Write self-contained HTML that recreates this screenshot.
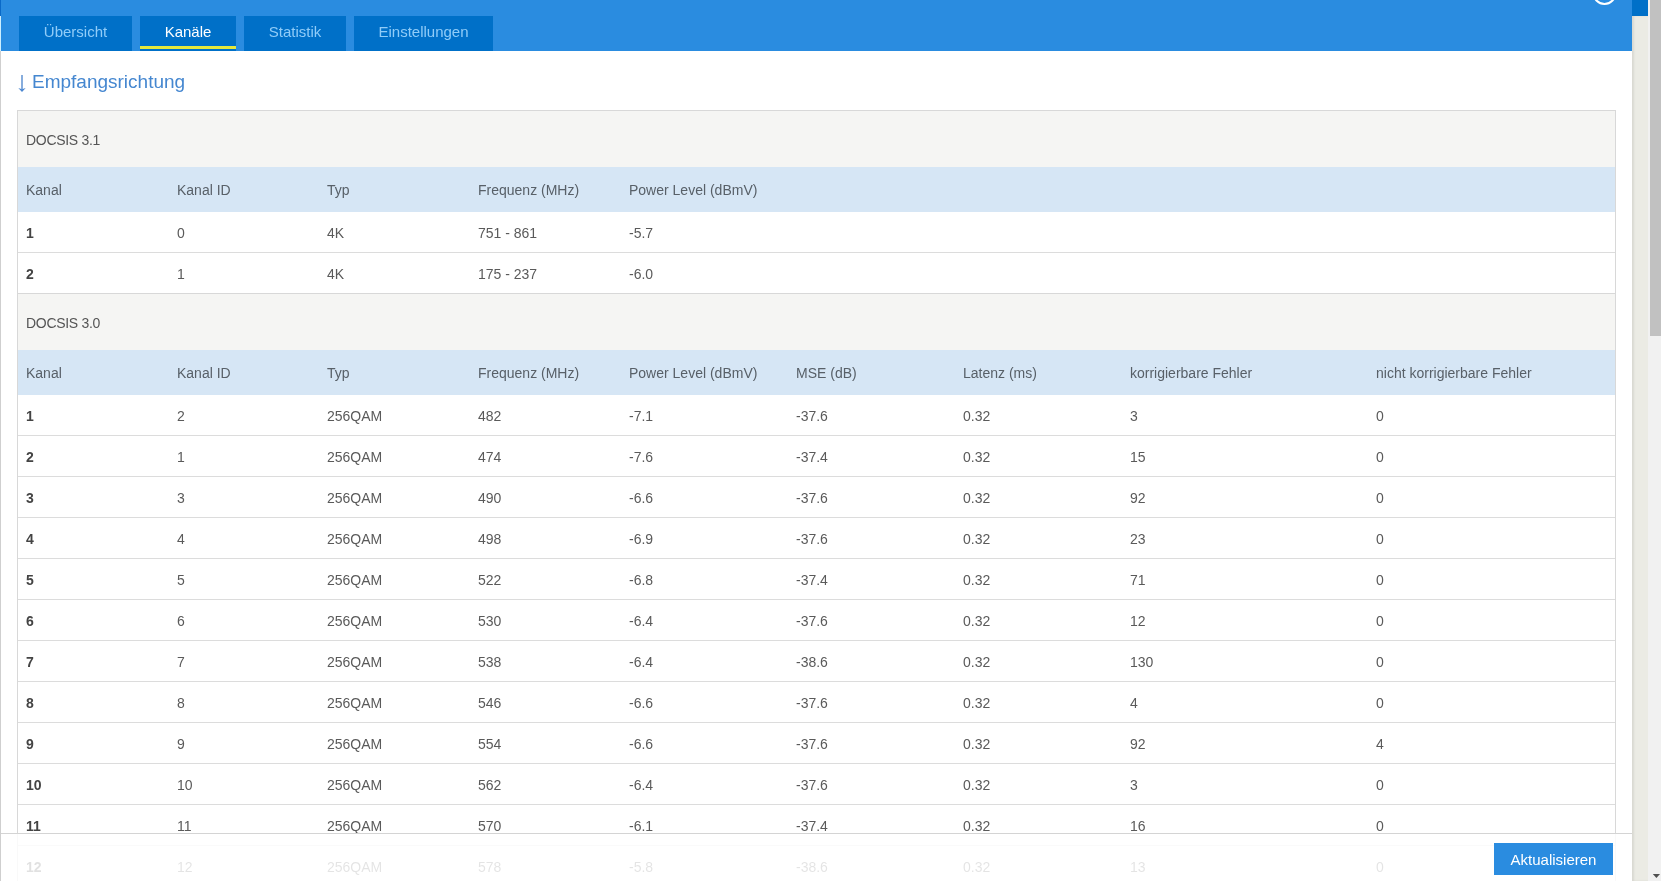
<!DOCTYPE html>
<html><head><meta charset="utf-8"><style>
*{margin:0;padding:0;box-sizing:border-box}
html,body{width:1661px;height:881px;overflow:hidden;background:#fff;font-family:"Liberation Sans",sans-serif;position:relative}
div{position:absolute}
.th,.td,.tab,.h2,.st,.btn{will-change:transform}
.lstrip{left:0;top:0;width:1px;height:881px;background:#cfcfcf}
.hdr{left:1px;top:0;width:1631px;height:51px;background:#2a8ce0}
.tab{top:16px;height:35px;background:#0070c8;color:#90ccf8;font-size:15px;text-align:center;line-height:31px}
.tab.on{color:#fff}
.uline{left:0;bottom:2px;width:100%;height:3px;background:#e4e83c}
.h2{left:32px;top:70px;font-size:19px;line-height:24px;color:#4587d0;white-space:nowrap}
.box{left:17px;width:1599px;border:1px solid #d8d8d8;background:#fff}
.sec{left:18px;width:1597px;background:#f5f5f3}
.st{left:26px;font-size:14px;letter-spacing:-0.3px;color:#555;white-space:nowrap}
.hd{left:18px;width:1597px;background:#d6e6f5}
.th{font-size:14px;color:#586068;white-space:nowrap;letter-spacing:0px}
.td{font-size:14px;color:#5a5a5a;white-space:nowrap;letter-spacing:0px}
.td.b{font-weight:bold;color:#444}
.rl{left:18px;width:1597px;height:1px;background:#dcdcdc}
.foot{left:1px;top:833px;width:1631px;height:48px;background:rgba(255,255,255,0.84);border-top:1px solid #d4d4d4}
.btn{left:1494px;top:843px;width:119px;height:32px;padding-top:1px;background:#2a8ce0;color:#fff;font-size:15px;text-align:center;line-height:32px;white-space:nowrap}
.rstrip{left:1632px;top:16px;width:16px;height:865px;background:#ebebe4;box-shadow:inset 2px 0 2px rgba(0,0,0,0.08)}
.rblk{left:1632px;top:0;width:16px;height:16px;background:#0070c8}
.track{left:1648px;top:0;width:13px;height:881px;background:#f1f1f1}
.thumb{left:1650px;top:0;width:11px;height:336px;background:#c1c1c1}
</style></head><body>
<div class="hdr"></div>
<div class="lstrip"></div>
<div style="left:0;top:0;width:1px;height:16px;background:#0a6ac8"></div>
<div style="left:0;top:16px;width:1px;height:35px;background:#cdefff"></div>
<div class="tab" style="left:19px;width:113px">Übersicht</div><div class="tab on" style="left:140px;width:96px">Kanäle<div class="uline"></div></div><div class="tab" style="left:244px;width:102px">Statistik</div><div class="tab" style="left:354px;width:139px">Einstellungen</div>
<svg style="position:absolute;left:1590px;top:0" width="30" height="10" viewBox="0 0 30 10"><circle cx="14.5" cy="-7" r="11" fill="none" stroke="#fff" stroke-width="2"/></svg>
<svg style="position:absolute;left:14px;top:70px" width="16" height="25" viewBox="0 0 16 25"><rect x="7.1" y="5" width="1.8" height="14" fill="#7aa5da"/><path d="M4.3 18.1 L8 21.9 L11.7 18.1 L8 19.3 Z" fill="#4a86d0"/></svg><div class="h2">Empfangsrichtung</div>
<div class="box" style="top:110px;height:184px"></div><div class="sec" style="top:111px;height:56px"></div><div class="st" style="top:112px;height:56px;line-height:56px">DOCSIS 3.1</div><div class="hd" style="top:167px;height:45px"></div><div class="th" style="left:26px;top:168px;height:45px;line-height:45px">Kanal</div><div class="th" style="left:177px;top:168px;height:45px;line-height:45px">Kanal ID</div><div class="th" style="left:327px;top:168px;height:45px;line-height:45px">Typ</div><div class="th" style="left:478px;top:168px;height:45px;line-height:45px">Frequenz (MHz)</div><div class="th" style="left:629px;top:168px;height:45px;line-height:45px">Power Level (dBmV)</div><div class="rl" style="top:252px"></div><div class="td b" style="left:26px;top:213px;height:40px;line-height:40px">1</div><div class="td" style="left:177px;top:213px;height:40px;line-height:40px">0</div><div class="td" style="left:327px;top:213px;height:40px;line-height:40px">4K</div><div class="td" style="left:478px;top:213px;height:40px;line-height:40px">751 - 861</div><div class="td" style="left:629px;top:213px;height:40px;line-height:40px">-5.7</div><div class="rl" style="top:293px"></div><div class="td b" style="left:26px;top:254px;height:40px;line-height:40px">2</div><div class="td" style="left:177px;top:254px;height:40px;line-height:40px">1</div><div class="td" style="left:327px;top:254px;height:40px;line-height:40px">4K</div><div class="td" style="left:478px;top:254px;height:40px;line-height:40px">175 - 237</div><div class="td" style="left:629px;top:254px;height:40px;line-height:40px">-6.0</div><div class="box" style="top:293px;height:628px"></div><div class="sec" style="top:294px;height:56px"></div><div class="st" style="top:295px;height:56px;line-height:56px">DOCSIS 3.0</div><div class="hd" style="top:350px;height:45px"></div><div class="th" style="left:26px;top:351px;height:45px;line-height:45px">Kanal</div><div class="th" style="left:177px;top:351px;height:45px;line-height:45px">Kanal ID</div><div class="th" style="left:327px;top:351px;height:45px;line-height:45px">Typ</div><div class="th" style="left:478px;top:351px;height:45px;line-height:45px">Frequenz (MHz)</div><div class="th" style="left:629px;top:351px;height:45px;line-height:45px">Power Level (dBmV)</div><div class="th" style="left:796px;top:351px;height:45px;line-height:45px">MSE (dB)</div><div class="th" style="left:963px;top:351px;height:45px;line-height:45px">Latenz (ms)</div><div class="th" style="left:1130px;top:351px;height:45px;line-height:45px">korrigierbare Fehler</div><div class="th" style="left:1376px;top:351px;height:45px;line-height:45px">nicht korrigierbare Fehler</div><div class="rl" style="top:435px"></div><div class="td b" style="left:26px;top:396px;height:40px;line-height:40px">1</div><div class="td" style="left:177px;top:396px;height:40px;line-height:40px">2</div><div class="td" style="left:327px;top:396px;height:40px;line-height:40px">256QAM</div><div class="td" style="left:478px;top:396px;height:40px;line-height:40px">482</div><div class="td" style="left:629px;top:396px;height:40px;line-height:40px">-7.1</div><div class="td" style="left:796px;top:396px;height:40px;line-height:40px">-37.6</div><div class="td" style="left:963px;top:396px;height:40px;line-height:40px">0.32</div><div class="td" style="left:1130px;top:396px;height:40px;line-height:40px">3</div><div class="td" style="left:1376px;top:396px;height:40px;line-height:40px">0</div><div class="rl" style="top:476px"></div><div class="td b" style="left:26px;top:437px;height:40px;line-height:40px">2</div><div class="td" style="left:177px;top:437px;height:40px;line-height:40px">1</div><div class="td" style="left:327px;top:437px;height:40px;line-height:40px">256QAM</div><div class="td" style="left:478px;top:437px;height:40px;line-height:40px">474</div><div class="td" style="left:629px;top:437px;height:40px;line-height:40px">-7.6</div><div class="td" style="left:796px;top:437px;height:40px;line-height:40px">-37.4</div><div class="td" style="left:963px;top:437px;height:40px;line-height:40px">0.32</div><div class="td" style="left:1130px;top:437px;height:40px;line-height:40px">15</div><div class="td" style="left:1376px;top:437px;height:40px;line-height:40px">0</div><div class="rl" style="top:517px"></div><div class="td b" style="left:26px;top:478px;height:40px;line-height:40px">3</div><div class="td" style="left:177px;top:478px;height:40px;line-height:40px">3</div><div class="td" style="left:327px;top:478px;height:40px;line-height:40px">256QAM</div><div class="td" style="left:478px;top:478px;height:40px;line-height:40px">490</div><div class="td" style="left:629px;top:478px;height:40px;line-height:40px">-6.6</div><div class="td" style="left:796px;top:478px;height:40px;line-height:40px">-37.6</div><div class="td" style="left:963px;top:478px;height:40px;line-height:40px">0.32</div><div class="td" style="left:1130px;top:478px;height:40px;line-height:40px">92</div><div class="td" style="left:1376px;top:478px;height:40px;line-height:40px">0</div><div class="rl" style="top:558px"></div><div class="td b" style="left:26px;top:519px;height:40px;line-height:40px">4</div><div class="td" style="left:177px;top:519px;height:40px;line-height:40px">4</div><div class="td" style="left:327px;top:519px;height:40px;line-height:40px">256QAM</div><div class="td" style="left:478px;top:519px;height:40px;line-height:40px">498</div><div class="td" style="left:629px;top:519px;height:40px;line-height:40px">-6.9</div><div class="td" style="left:796px;top:519px;height:40px;line-height:40px">-37.6</div><div class="td" style="left:963px;top:519px;height:40px;line-height:40px">0.32</div><div class="td" style="left:1130px;top:519px;height:40px;line-height:40px">23</div><div class="td" style="left:1376px;top:519px;height:40px;line-height:40px">0</div><div class="rl" style="top:599px"></div><div class="td b" style="left:26px;top:560px;height:40px;line-height:40px">5</div><div class="td" style="left:177px;top:560px;height:40px;line-height:40px">5</div><div class="td" style="left:327px;top:560px;height:40px;line-height:40px">256QAM</div><div class="td" style="left:478px;top:560px;height:40px;line-height:40px">522</div><div class="td" style="left:629px;top:560px;height:40px;line-height:40px">-6.8</div><div class="td" style="left:796px;top:560px;height:40px;line-height:40px">-37.4</div><div class="td" style="left:963px;top:560px;height:40px;line-height:40px">0.32</div><div class="td" style="left:1130px;top:560px;height:40px;line-height:40px">71</div><div class="td" style="left:1376px;top:560px;height:40px;line-height:40px">0</div><div class="rl" style="top:640px"></div><div class="td b" style="left:26px;top:601px;height:40px;line-height:40px">6</div><div class="td" style="left:177px;top:601px;height:40px;line-height:40px">6</div><div class="td" style="left:327px;top:601px;height:40px;line-height:40px">256QAM</div><div class="td" style="left:478px;top:601px;height:40px;line-height:40px">530</div><div class="td" style="left:629px;top:601px;height:40px;line-height:40px">-6.4</div><div class="td" style="left:796px;top:601px;height:40px;line-height:40px">-37.6</div><div class="td" style="left:963px;top:601px;height:40px;line-height:40px">0.32</div><div class="td" style="left:1130px;top:601px;height:40px;line-height:40px">12</div><div class="td" style="left:1376px;top:601px;height:40px;line-height:40px">0</div><div class="rl" style="top:681px"></div><div class="td b" style="left:26px;top:642px;height:40px;line-height:40px">7</div><div class="td" style="left:177px;top:642px;height:40px;line-height:40px">7</div><div class="td" style="left:327px;top:642px;height:40px;line-height:40px">256QAM</div><div class="td" style="left:478px;top:642px;height:40px;line-height:40px">538</div><div class="td" style="left:629px;top:642px;height:40px;line-height:40px">-6.4</div><div class="td" style="left:796px;top:642px;height:40px;line-height:40px">-38.6</div><div class="td" style="left:963px;top:642px;height:40px;line-height:40px">0.32</div><div class="td" style="left:1130px;top:642px;height:40px;line-height:40px">130</div><div class="td" style="left:1376px;top:642px;height:40px;line-height:40px">0</div><div class="rl" style="top:722px"></div><div class="td b" style="left:26px;top:683px;height:40px;line-height:40px">8</div><div class="td" style="left:177px;top:683px;height:40px;line-height:40px">8</div><div class="td" style="left:327px;top:683px;height:40px;line-height:40px">256QAM</div><div class="td" style="left:478px;top:683px;height:40px;line-height:40px">546</div><div class="td" style="left:629px;top:683px;height:40px;line-height:40px">-6.6</div><div class="td" style="left:796px;top:683px;height:40px;line-height:40px">-37.6</div><div class="td" style="left:963px;top:683px;height:40px;line-height:40px">0.32</div><div class="td" style="left:1130px;top:683px;height:40px;line-height:40px">4</div><div class="td" style="left:1376px;top:683px;height:40px;line-height:40px">0</div><div class="rl" style="top:763px"></div><div class="td b" style="left:26px;top:724px;height:40px;line-height:40px">9</div><div class="td" style="left:177px;top:724px;height:40px;line-height:40px">9</div><div class="td" style="left:327px;top:724px;height:40px;line-height:40px">256QAM</div><div class="td" style="left:478px;top:724px;height:40px;line-height:40px">554</div><div class="td" style="left:629px;top:724px;height:40px;line-height:40px">-6.6</div><div class="td" style="left:796px;top:724px;height:40px;line-height:40px">-37.6</div><div class="td" style="left:963px;top:724px;height:40px;line-height:40px">0.32</div><div class="td" style="left:1130px;top:724px;height:40px;line-height:40px">92</div><div class="td" style="left:1376px;top:724px;height:40px;line-height:40px">4</div><div class="rl" style="top:804px"></div><div class="td b" style="left:26px;top:765px;height:40px;line-height:40px">10</div><div class="td" style="left:177px;top:765px;height:40px;line-height:40px">10</div><div class="td" style="left:327px;top:765px;height:40px;line-height:40px">256QAM</div><div class="td" style="left:478px;top:765px;height:40px;line-height:40px">562</div><div class="td" style="left:629px;top:765px;height:40px;line-height:40px">-6.4</div><div class="td" style="left:796px;top:765px;height:40px;line-height:40px">-37.6</div><div class="td" style="left:963px;top:765px;height:40px;line-height:40px">0.32</div><div class="td" style="left:1130px;top:765px;height:40px;line-height:40px">3</div><div class="td" style="left:1376px;top:765px;height:40px;line-height:40px">0</div><div class="rl" style="top:845px"></div><div class="td b" style="left:26px;top:806px;height:40px;line-height:40px">11</div><div class="td" style="left:177px;top:806px;height:40px;line-height:40px">11</div><div class="td" style="left:327px;top:806px;height:40px;line-height:40px">256QAM</div><div class="td" style="left:478px;top:806px;height:40px;line-height:40px">570</div><div class="td" style="left:629px;top:806px;height:40px;line-height:40px">-6.1</div><div class="td" style="left:796px;top:806px;height:40px;line-height:40px">-37.4</div><div class="td" style="left:963px;top:806px;height:40px;line-height:40px">0.32</div><div class="td" style="left:1130px;top:806px;height:40px;line-height:40px">16</div><div class="td" style="left:1376px;top:806px;height:40px;line-height:40px">0</div><div class="rl" style="top:886px"></div><div class="td b" style="left:26px;top:847px;height:40px;line-height:40px">12</div><div class="td" style="left:177px;top:847px;height:40px;line-height:40px">12</div><div class="td" style="left:327px;top:847px;height:40px;line-height:40px">256QAM</div><div class="td" style="left:478px;top:847px;height:40px;line-height:40px">578</div><div class="td" style="left:629px;top:847px;height:40px;line-height:40px">-5.8</div><div class="td" style="left:796px;top:847px;height:40px;line-height:40px">-38.6</div><div class="td" style="left:963px;top:847px;height:40px;line-height:40px">0.32</div><div class="td" style="left:1130px;top:847px;height:40px;line-height:40px">13</div><div class="td" style="left:1376px;top:847px;height:40px;line-height:40px">0</div>
<div class="foot"></div>
<div class="btn">Aktualisieren</div>
<div class="track"></div>
<div class="rblk"></div>
<div class="rstrip"></div>
<div class="thumb"></div>
<svg style="position:absolute;left:1650px;top:871px" width="11" height="10"><path d="M2.8 3 L10 3 L6.4 7 Z" fill="#505050"/></svg>
</body></html>
